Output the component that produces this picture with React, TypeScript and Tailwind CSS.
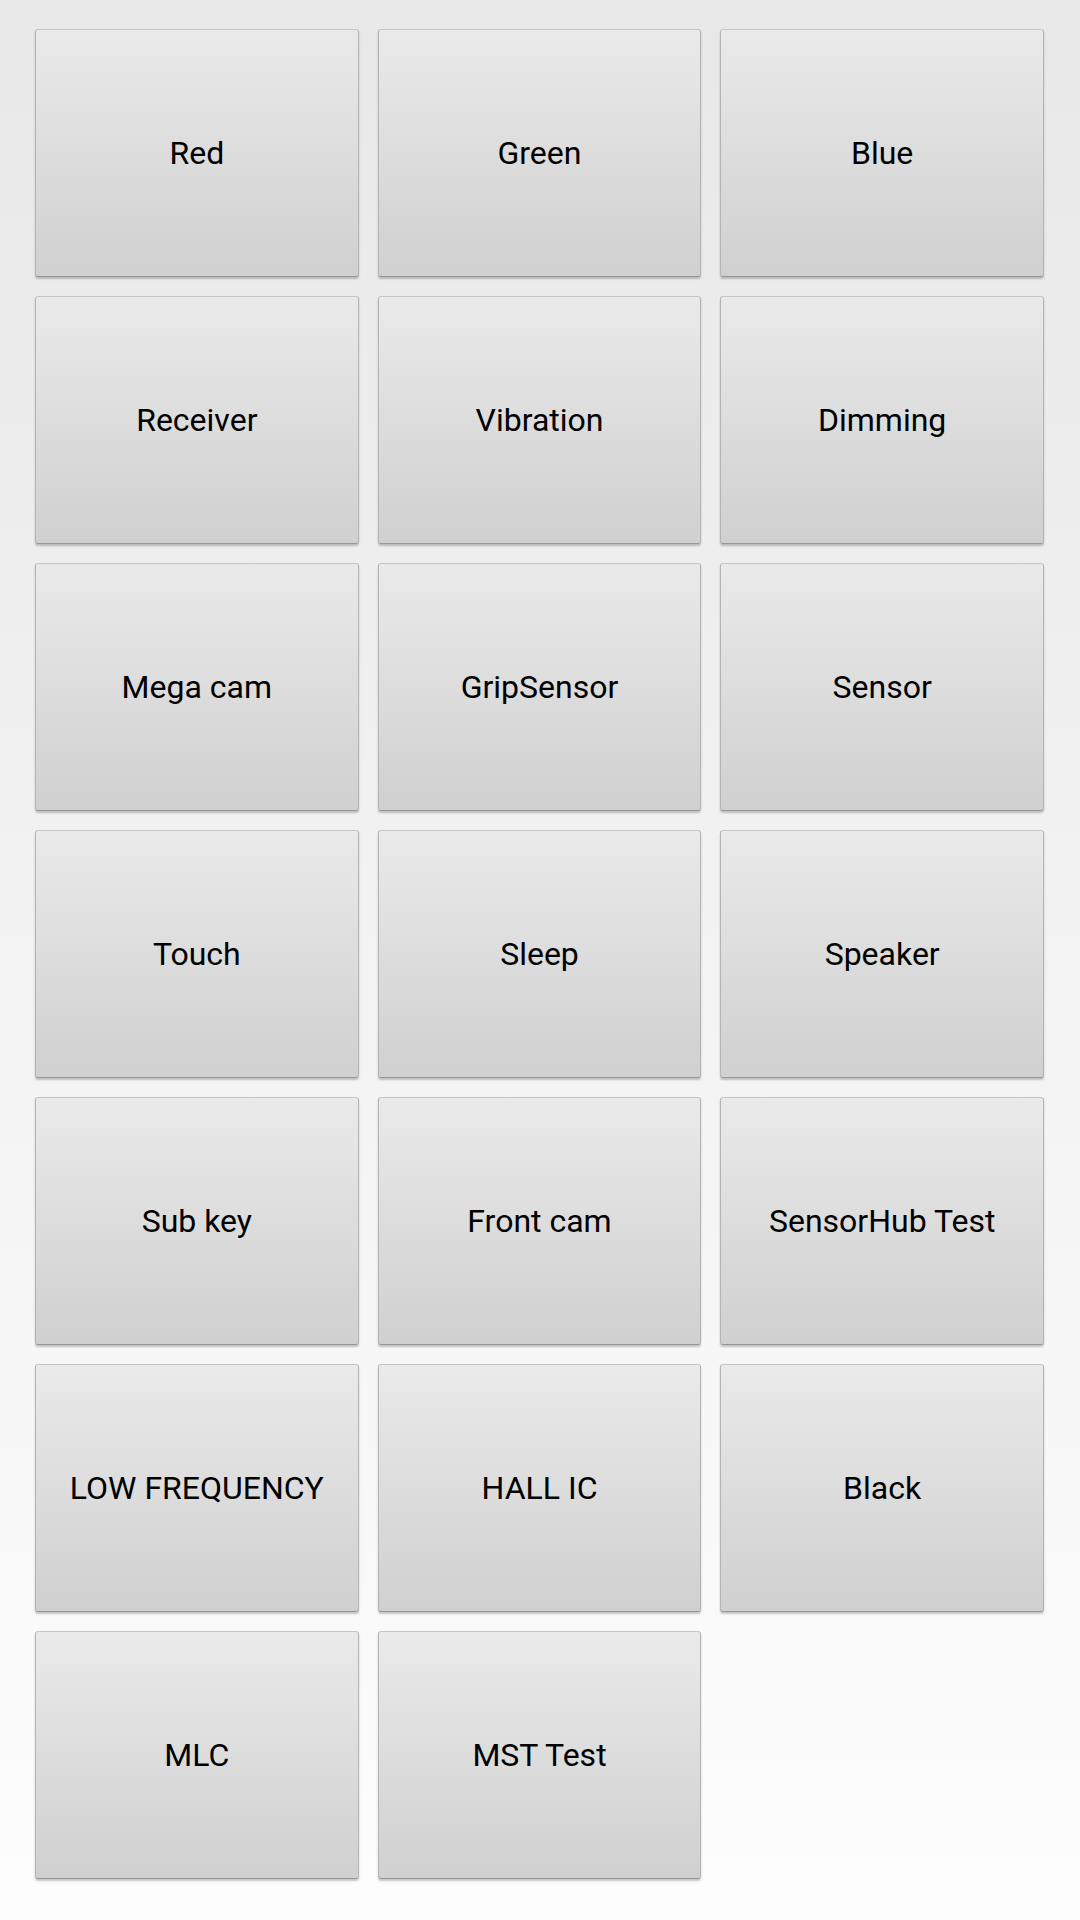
import React from 'react';

const tests = [
  'Red', 'Green', 'Blue',
  'Receiver', 'Vibration', 'Dimming',
  'Mega cam', 'GripSensor', 'Sensor',
  'Touch', 'Sleep', 'Speaker',
  'Sub key', 'Front cam', 'SensorHub Test',
  'LOW FREQUENCY', 'HALL IC', 'Black',
  'MLC', 'MST Test',
];

export default function App() {
  return (
    <div
      className="w-[1080px] h-[1920px] bg-gradient-to-b from-[#e8e8e8] to-[#fdfdfd] pl-[35px] pr-[36px] pt-[29px]"
      style={{ fontFamily: 'Roboto, "Noto Sans", sans-serif' }}
    >
      <div className="grid grid-cols-3 gap-x-[19px] gap-y-[19px]">
        {tests.map((name) => (
          <button
            key={name}
            className="h-[248px] flex items-center justify-center rounded-[3px] border border-[#c6c6c6] border-x-[#b4b4b4] border-b-[#979797] bg-gradient-to-b from-[#eaeaea] to-[#d0d0d0] shadow-[0_2px_2px_rgba(0,0,0,0.22)] text-[32px] text-black"
          >
            {name}
          </button>
        ))}
      </div>
    </div>
  );
}
